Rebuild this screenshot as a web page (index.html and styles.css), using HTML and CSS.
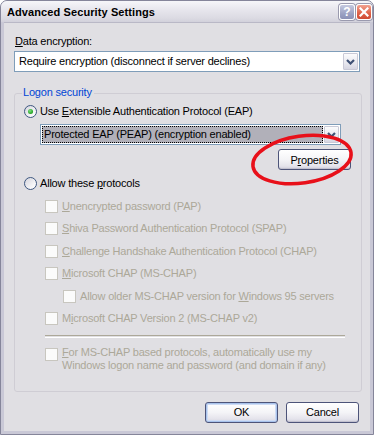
FILE: index.html
```html
<!DOCTYPE html>
<html lang="en">
<head>
<meta charset="UTF-8">
<title>Advanced Security Settings</title>
<link rel="stylesheet" href="styles.css">
</head>
<body>
<div class="window">
    <div class="titlebar">
        <span class="title">Advanced Security Settings</span>
        <div class="caption-buttons">
            <span class="cap-btn help">?</span>
            <span class="cap-btn close">
                <svg width="10" height="10" viewBox="0 0 10 10"><path d="M1.5 1.5 L8.5 8.5 M8.5 1.5 L1.5 8.5" stroke="#fff" stroke-width="2.2" stroke-linecap="square"/></svg>
            </span>
        </div>
    </div>

    <div class="client">
        <div class="field-label"><u>D</u>ata encryption:</div>
        <div class="combo combo-wide">
            <span class="combo-text">Require encryption (disconnect if server declines)</span>
            <span class="combo-arrow"><svg width="9" height="6" viewBox="0 0 9 6"><path d="M1 1 L4.5 4.5 L8 1" fill="none" stroke="#3f5175" stroke-width="2.2"/></svg></span>
        </div>

        <fieldset class="group">
            <legend>Logon security</legend>

            <div class="radio-row">
                <span class="radio checked"></span>
                <span>Use <u>E</u>xtensible Authentication Protocol (EAP)</span>
            </div>

            <div class="combo combo-eap">
                <span class="combo-text selected">Protected EAP (PEAP) (encryption enabled)</span>
                <span class="combo-arrow"><svg width="9" height="6" viewBox="0 0 9 6"><path d="M1 1 L4.5 4.5 L8 1" fill="none" stroke="#3f5175" stroke-width="2.2"/></svg></span>
            </div>

            <div class="props-row">
                <button class="btn">P<u>r</u>operties</button>
            </div>

            <div class="radio-row second">
                <span class="radio"></span>
                <span>Allow these <u>p</u>rotocols</span>
            </div>

            <div class="protocols">
                <div class="check-row"><span class="check"></span><span><u>U</u>nencrypted password (PAP)</span></div>
                <div class="check-row"><span class="check"></span><span><u>S</u>hiva Password Authentication Protocol (SPAP)</span></div>
                <div class="check-row"><span class="check"></span><span><u>C</u>hallenge Handshake Authentication Protocol (CHAP)</span></div>
                <div class="check-row"><span class="check"></span><span><u>M</u>icrosoft CHAP (MS-CHAP)</span></div>
                <div class="check-row nested"><span class="check"></span><span>Allow older MS-CHAP version for <u>W</u>indows 95 servers</span></div>
                <div class="check-row"><span class="check"></span><span>M<u>i</u>crosoft CHAP Version 2 (MS-CHAP v2)</span></div>
            </div>

            <div class="separator"></div>

            <div class="check-row multi">
                <span class="check"></span>
                <span><u>F</u>or MS-CHAP based protocols, automatically use my<br>Windows logon name and password (and domain if any)</span>
            </div>
        </fieldset>

        <div class="dialog-buttons">
            <button class="btn default">OK</button>
            <button class="btn">Cancel</button>
        </div>
    </div>

    <svg class="marker" width="374" height="435" viewBox="0 0 374 435">
        <ellipse cx="302" cy="159.5" rx="49.5" ry="23.5" transform="rotate(-8 302 159.5)" fill="none" stroke="#e8101a" stroke-width="3.5"/>
    </svg>
</div>
</body>
</html>
```

FILE: styles.css
```css
html, body {
    margin: 0;
    background-color: #ffffff;
}

.window {
    position: relative;
    width: 374px;
    height: 435px;
    box-sizing: border-box;
    display: flex;
    flex-direction: column;
    background-color: #c9c8d6;
    border: 1px solid #85859a;
    border-radius: 7px 7px 0 0;
    overflow: hidden;
    font-family: Tahoma, "Liberation Sans", Arial, sans-serif;
    font-size: 11px;
    letter-spacing: -0.2px;
    color: #000;
}

/* title bar */
.titlebar {
    height: 21px;
    display: flex;
    align-items: center;
    justify-content: space-between;
    padding: 0 1px 0 6px;
    background: linear-gradient(#f6f6f9, #e6e5ec 45%, #dcdbe3 80%, #d2d1db);
}

.title {
    font-weight: bold;
    font-size: 11px;
    letter-spacing: 0.1px;
    margin-top: 1px;
}

.caption-buttons {
    display: flex;
    gap: 1px;
    margin-top: 1px;
}

.cap-btn {
    width: 14px;
    height: 14px;
    border: 1px solid #fff;
    border-radius: 3px;
    display: flex;
    align-items: center;
    justify-content: center;
    box-shadow: 0 0 0 1px #9a9aae;
}

.help {
    background: linear-gradient(#c5c9df, #9da3c4 60%, #8b91b6);
    color: #fff;
    font-weight: bold;
    font-size: 12px;
    letter-spacing: 0;
}

.close {
    background: linear-gradient(#f2a290, #e0654b 55%, #cf4b33);
}

/* client area */
.client {
    flex: 1;
    display: flex;
    flex-direction: column;
    background-color: #e0dfe3;
    margin: 0 3px 3px 3px;
    padding: 12px 10px 0 10px;
    border-top: 1px solid #b9b8c6;
}

.field-label {
    line-height: 13px;
    margin-left: 1px;
}

u {
    text-decoration: underline;
    text-underline-offset: 1px;
}

.combo {
    display: flex;
    height: 21px;
    box-sizing: border-box;
    border: 1px solid #7f9db9;
    background-color: #fff;
    padding: 1px;
}

.combo-wide {
    margin-top: 3px;
}

.combo-eap {
    width: 301px;
    margin: 6px 0 0 16px;
}

.combo-text {
    flex: 1;
    line-height: 17px;
    padding-left: 3px;
    white-space: nowrap;
}

.combo-text.selected {
    background-color: #b1b0b9;
    outline: 1px dotted #000;
    outline-offset: -1px;
    margin-right: 1px;
    padding-left: 2px;
}

.combo-arrow {
    width: 15px;
    box-sizing: border-box;
    display: flex;
    align-items: center;
    justify-content: center;
    border: 1px solid #c9c9d6;
    border-radius: 1px;
    background: linear-gradient(#fbfbfc, #e8e8ef 60%, #d6d6e2);
}

/* group box */
.group {
    margin: 14px -2px 0 0;
    padding: 4px 9px 19px 9px;
    border: 1px solid #cfcdd4;
    border-radius: 3px;
    min-width: 0;
}

.group legend {
    color: #0046d5;
    padding: 0 2px 2px 1px;
    margin-left: -2px;
    line-height: 13px;
}

.radio-row {
    display: flex;
    align-items: center;
    gap: 3px;
    line-height: 13px;
}

.radio-row.second {
    margin-top: 7px;
}

.radio {
    width: 13px;
    height: 13px;
    box-sizing: border-box;
    border-radius: 50%;
    border: 1px solid #3e5780;
    background: linear-gradient(135deg, #d4d4dc, #f6f6f8 70%, #ffffff);
    display: flex;
    align-items: center;
    justify-content: center;
}

.radio.checked::after {
    content: "";
    width: 5px;
    height: 5px;
    border-radius: 50%;
    background: radial-gradient(circle at 40% 35%, #7fe07f, #21a121 70%);
}

.props-row {
    display: flex;
    justify-content: flex-end;
    margin-top: 4px;
    padding-right: 1px;
}

.btn {
    width: 73px;
    height: 21px;
    padding: 0;
    font-family: inherit;
    font-size: 11px;
    letter-spacing: -0.2px;
    color: #000;
    border: 1px solid #4d5479;
    border-radius: 3px;
    background: linear-gradient(#ffffff, #f4f4f7 50%, #e4e3eb 85%, #cfcedb);
    box-shadow: inset 0 -1px 0 #c2c1cf;
}

.btn.default {
    box-shadow: inset 0 0 0 1px #a8c3ec, inset 0 0 0 2px #cfdcf4;
}

/* protocol checkboxes */
.protocols {
    display: flex;
    flex-direction: column;
    gap: 9.6px;
    margin: 9.5px 0 0 21px;
}

.check-row {
    display: flex;
    align-items: center;
    gap: 4px;
    line-height: 13px;
    color: #aca899;
    white-space: nowrap;
}

.check-row.nested {
    margin-left: 18px;
}

.check {
    width: 13px;
    height: 13px;
    box-sizing: border-box;
    border: 1px solid #c8c6bf;
    background-color: #fbfbfb;
    flex: none;
}

.separator {
    width: 300px;
    height: 1px;
    margin: 9.5px 0 0 21px;
    border-top: 1px solid #aca899;
    border-bottom: 1px solid #ffffff;
}

.check-row.multi {
    align-items: flex-start;
    margin: 8px 0 0 21px;
}

.check-row.multi .check {
    margin-top: 2px;
}

.dialog-buttons {
    display: flex;
    justify-content: flex-end;
    gap: 8px;
    margin: 10px 1px 0 0;
}

.marker {
    position: absolute;
    left: -1px;
    top: -1px;
    pointer-events: none;
}
```
